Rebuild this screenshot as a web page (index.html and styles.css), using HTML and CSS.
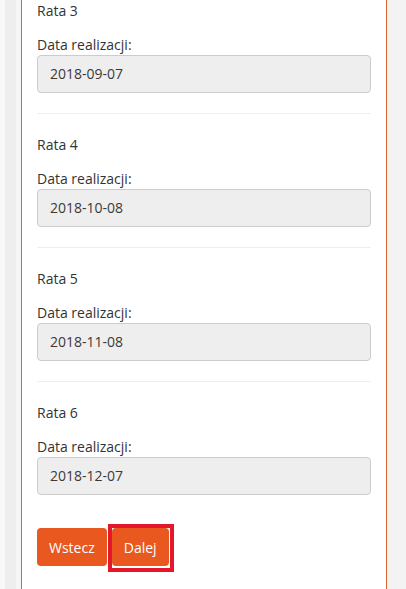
FILE: index.html
```html
<!DOCTYPE html>
<html lang="pl">
<head>
<meta charset="utf-8">
<title>Raty</title>
<link rel="stylesheet" href="styles.css">
</head>
<body>
<div class="page">
  <div class="card">
    <div class="rata">
      <div class="rata-title">Rata 3</div>
      <label class="field-label">Data realizacji:</label>
      <div class="field-input">2018-09-07</div>
    </div>
    <hr class="sep">
    <div class="rata">
      <div class="rata-title">Rata 4</div>
      <label class="field-label">Data realizacji:</label>
      <div class="field-input">2018-10-08</div>
    </div>
    <hr class="sep">
    <div class="rata">
      <div class="rata-title">Rata 5</div>
      <label class="field-label">Data realizacji:</label>
      <div class="field-input">2018-11-08</div>
    </div>
    <hr class="sep">
    <div class="rata">
      <div class="rata-title">Rata 6</div>
      <label class="field-label">Data realizacji:</label>
      <div class="field-input">2018-12-07</div>
    </div>
    <div class="actions">
      <button class="btn">Wstecz</button>
      <span class="btn-wrap">
        <button class="btn">Dalej</button>
        <span class="highlight"></span>
      </span>
    </div>
  </div>
</div>
</body>
</html>
```

FILE: styles.css
```css
html, body {
  margin: 0;
  padding: 0;
}
body {
  background: #f3f3f3;
  font-family: "Open Sans", "Liberation Sans", sans-serif;
  font-size: 14px;
  color: #333;
}
.page {
  min-height: 589px;
  padding: 0 19px 0 21px;
  display: flex;
  background: linear-gradient(to right, #f8f8f8 0 5px, #eeeeee 5px 16px, #f6f6f6 16px 21px, #f3f3f3 21px);
}
.card {
  flex: 1;
  background: #fff;
  border-left: 1px solid #d8692c;
  border-right: 1px solid #d8692c;
  padding: 1px 15px 0 15px;
}
.rata-title {
  line-height: 20px;
  margin-bottom: 14px;
}
.field-label {
  display: block;
  line-height: 20px;
}
.field-input {
  box-sizing: border-box;
  height: 38px;
  line-height: 36px;
  padding: 0 12px;
  background: #eeeeee;
  border: 1px solid #cccccc;
  border-radius: 4px;
  color: #3a3a3a;
}
.sep {
  border: 0;
  border-top: 1px solid #eeeeee;
  margin: 20px 0 21px 0;
  height: 0;
}
.actions {
  margin-top: 33px;
  display: flex;
  gap: 5px;
}
.btn {
  font-family: "Open Sans", "Liberation Sans", sans-serif;
  font-size: 14px;
  color: #fff;
  background: #e8581f;
  border: 0;
  border-radius: 4px;
  height: 38px;
  padding: 0 12px;
  margin: 0;
}
.btn-wrap {
  position: relative;
  display: inline-flex;
}
.highlight {
  position: absolute;
  left: -4px;
  top: -4px;
  right: -5px;
  bottom: -6px;
  border: 4px solid #e3182a;
  pointer-events: none;
}
```
